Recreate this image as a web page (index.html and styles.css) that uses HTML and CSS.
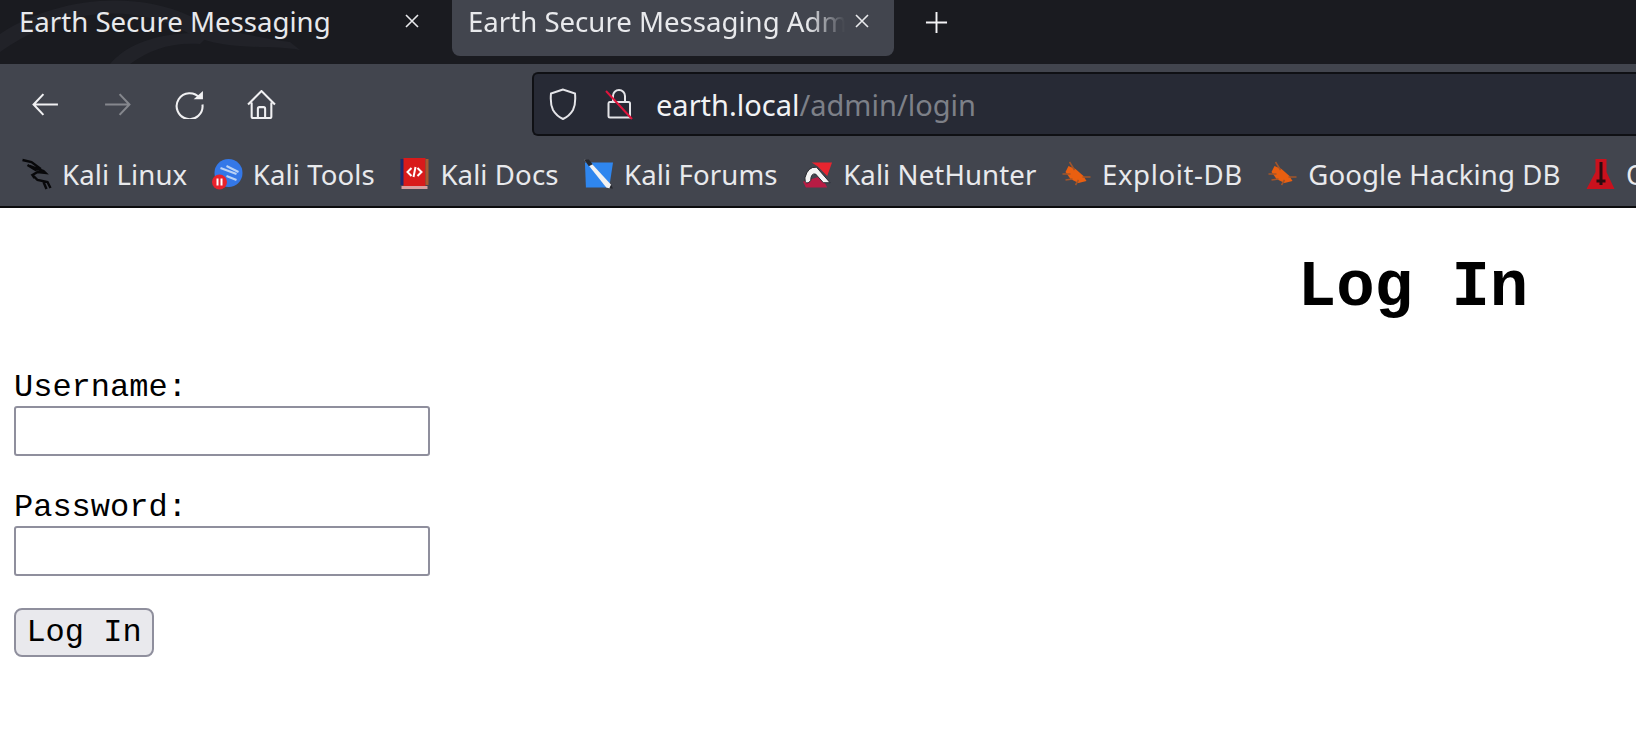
FILE: index.html
```html
<!DOCTYPE html>
<html lang="en">
<head>
  <meta charset="UTF-8" />
  <title>Earth Secure Messaging Admin</title>
  <link rel="stylesheet" href="styles.css">
</head>
<body>

  <header class="browser">
    <div class="tabbar">
      <svg class="wallpaper" viewBox="0 0 400 64" aria-hidden="true">
        <path d="M0 52 C60 10 130 0 190 34 C225 52 270 44 300 50 L290 42 C250 36 220 30 190 16 C130 -12 50 0 0 34 Z" />
        <path d="M110 64 C130 40 170 30 210 34 L200 44 C170 42 150 50 130 64 Z" />
      </svg>
      <div class="tab">
        <span class="tab-title">Earth Secure Messaging</span>
        <svg class="tab-close" viewBox="0 0 16 16"><path d="M2 2 14 14M14 2 2 14" /></svg>
      </div>
      <div class="tab tab-active">
        <span class="tab-title tab-fade">Earth Secure Messaging Admin</span>
        <svg class="tab-close" viewBox="0 0 16 16"><path d="M2 2 14 14M14 2 2 14" /></svg>
      </div>
      <svg class="new-tab" viewBox="0 0 24 24"><path d="M12 1V23M1 12H23" /></svg>
    </div>

    <div class="navbar">
      <svg class="nav-icon" viewBox="0 0 28 28"><path d="M26 14H3M12 4 2.500 14 12 24" /></svg>
      <svg class="nav-icon nav-off" viewBox="0 0 28 28"><path d="M2 14H25M16 4 25.500 14 16 24" /></svg>
      <svg class="nav-icon" viewBox="0 0 28 28"><path d="M24 8A12.500 12.500 0 1 0 26.500 14" /><path class="solid" d="M18 9H27V1Z" /></svg>
      <svg class="nav-icon" viewBox="0 0 28 28"><path d="M1 14 14 1 27 14M4.500 12V25.500Q4.500 27 6 27H22Q23.500 27 23.500 25.500V12M10.500 27V18Q10.500 16.500 12 16.500H16Q17.500 16.500 17.500 18V27" /></svg>

      <div class="urlbar">
        <svg class="url-icon" viewBox="0 0 28 32"><path d="M14 1.500 2 5.500Q1 16 4 22 7.500 28 14 31 20.500 28 24 22 27 16 26 5.500Z" /></svg>
        <svg class="url-icon lock" viewBox="0 0 28 32">
          <path d="M8 14V8A6 6 0 0 1 20 8V14M4.500 14H23.500Q25 14 25 15.500V29.500H5Q3.500 29.500 3.500 28V15.500Q3.500 14 4.500 14Z" />
          <path class="slash" d="M1 3 27 31" />
        </svg>
        <span class="url-text">earth.local<span class="url-path">/admin/login</span></span>
      </div>
    </div>

    <nav class="bookmarks">
      <a class="mark">
        <svg viewBox="0 0 30 32"><path class="kali" d="M1 2 10 4 18 10 14 12 6 7M8 8 22 13 24 15 16 14 11 17 16 22 26 24 29 30M11 17 13 20M22 24 25 31" /></svg>
        Kali Linux
      </a>
      <a class="mark">
        <svg viewBox="0 0 30 32"><circle cx="16" cy="15" r="14" fill="#3478e8" /><path d="M8 10 24 16M14 8 26 14M14 18 24 22" fill="none" stroke="#b9d2f5" stroke-width="2" /><circle cx="7" cy="24" r="7.500" fill="#e8222c" /><path d="M5 20.500V27.500M9 20.500V27.500" stroke="#fff" stroke-width="2" /></svg>
        Kali Tools
      </a>
      <a class="mark">
        <svg viewBox="0 0 30 32"><rect x="1" y="1" width="4" height="26" fill="#1d2a6e" /><rect x="4" y="0" width="22" height="28" fill="#d81b1b" /><rect x="26" y="1" width="3" height="26" fill="#a85a30" /><rect x="2" y="28" width="26" height="3" fill="#d8a0a0" /><path d="M12 10 8 14 12 18M18 10 22 14 18 18M16 9 14 19" fill="none" stroke="#fff" stroke-width="2" /></svg>
        Kali Docs
      </a>
      <a class="mark">
        <svg viewBox="0 0 32 32"><path d="M2 4H31L27 30H3Z" fill="#2f86ee" /><path d="M1 1 6 2 29 27 28 31 24 30Z" fill="#f2f2f2" /><path d="M1 1 6 1 10 6 6 8Z" fill="#26282e" /><path d="M29 27 31 31 27 31Z" fill="#26282e" /></svg>
        Kali Forums
      </a>
      <a class="mark">
        <svg viewBox="0 0 32 32"><path d="M10 4H31L26 18 16 8Z" fill="#e8252f" /><path d="M1 24 4 30 26 30 20 18Z" fill="#b81c44" /><path d="M3 20Q6 8 15 9L29 25 22 25 14 16Q9 15 9 23 3 29 3 20Z" fill="#f4f4f4" stroke="#26282e" stroke-width="1" /></svg>
        Kali NetHunter
      </a>
      <a class="mark mark-wide">
        <svg viewBox="0 0 30 32"><path class="bug" d="M7 8 14 11 22 18 25 23 17 25 9 21 4 14Z" /><path class="legs" d="M8 4 13 12M1 16 9 16M4 22 11 21M14 27 17 22M29 19 21 19" /></svg>
        Exploit-DB
      </a>
      <a class="mark">
        <svg viewBox="0 0 30 32"><path class="bug" d="M7 8 14 11 22 18 25 23 17 25 9 21 4 14Z" /><path class="legs" d="M8 4 13 12M1 16 9 16M4 22 11 21M14 27 17 22M29 19 21 19" /></svg>
        Google Hacking DB
      </a>
      <a class="mark">
        <svg viewBox="0 0 30 32"><path d="M10 1H21V14L29 31H1L10 14Z" fill="#c9111d" /><path d="M15.500 4V27M11 23H20" fill="none" stroke="#2a0c10" stroke-width="3" /></svg>
        OffSec
      </a>
    </nav>
  </header>

  <main class="page">
    <h1>Log In</h1>
    <form class="login">
      <label for="username">Username:</label>
      <input type="text" id="username">
      <label for="password">Password:</label>
      <input type="password" id="password">
      <button type="button">Log In</button>
    </form>
  </main>

</body>
</html>
```

FILE: styles.css
```css
html, body { margin: 0; height: 100%; overflow: hidden; background: #fff; }
body { font-family: "Liberation Mono", monospace; color: #000; }

.browser { font-family: "Noto Sans", sans-serif; font-size: 27.6px; color: #e8e9ec; }

.tabbar {
  height: 64px; display: flex; position: relative; overflow: hidden;
  background: #1a1b20;
}
.wallpaper { position: absolute; left: 0; top: 0; width: 400px; height: 64px; }
.wallpaper path { fill: #212228; }
.tab {
  width: 452px; height: 56px; box-sizing: border-box; flex: none; position: relative;
  display: flex; align-items: center; padding: 0 0 14px 19px;
}
.tab-active {
  width: 442px; padding-left: 16px;
  background: #42454e; border-radius: 0 0 8px 8px;
}
.tab-title { flex: 1; min-width: 0; overflow: hidden; white-space: nowrap; }
.tab-fade {
  margin-right: 9px;
  -webkit-mask-image: linear-gradient(to right, #000 90%, transparent);
  mask-image: linear-gradient(to right, #000 90%, transparent);
}
.tab-close { width: 16px; height: 16px; flex: none; margin-right: 32px; }
.tab-active .tab-close { margin-right: 24px; }
.tab-close path { stroke: #e8e9ec; stroke-width: 1.6; fill: none; }
.new-tab { width: 23px; height: 23px; margin: 11px 0 0 31px; position: relative; }
.new-tab path { stroke: #f4f4f6; stroke-width: 2; fill: none; }

.navbar {
  height: 72px; box-sizing: border-box; background: #42454e;
  display: flex; align-items: center; padding: 8px 0 0 31px;
}
.nav-icon { width: 29px; height: 29px; flex: none; margin-right: 43px; }
.nav-icon path { stroke: #f0f0f2; stroke-width: 2; fill: none; }
.nav-icon .solid { fill: #f0f0f2; stroke: none; }
.nav-off path { stroke: #85878d; }
.nav-icon:nth-child(4) { margin-right: 0; }
.urlbar {
  margin-left: 256px; flex: 1; height: 64px; box-sizing: border-box;
  background: #272a35; border: 2px solid #0f1014; border-right: 0;
  border-radius: 6px 0 0 6px;
  display: flex; align-items: center; padding-left: 15px;
}
.url-icon { width: 28px; height: 32px; flex: none; margin-right: 28px; }
.url-icon path { stroke: #e4e4e8; stroke-width: 2; fill: none; }
.url-icon .slash { stroke: #e0143c; }
.lock { margin-right: 23px; }
.url-text { font-size: 29px; color: #f2f3f5; }
.url-path { color: #7d8088; }

.bookmarks {
  height: 72px; box-sizing: border-box; background: #42454e;
  border-bottom: 2px solid #0c0c0e;
  display: flex; align-items: center; padding: 6px 0 0 21px; gap: 24.500px;
  white-space: nowrap; overflow: hidden; letter-spacing: 0.100px;
}
.mark { display: flex; align-items: center; gap: 10px; flex: none; }
.mark-wide { letter-spacing: 0.600px; }
.mark svg { width: 31px; height: 32px; flex: none; }
.kali { fill: none; stroke: #08080a; stroke-width: 2.400; }
.bug { fill: #ea5f10; }
.legs { stroke: #a3552a; stroke-width: 1.500; fill: none; }

/* the page is wider than the captured window, so the heading sits far right */
.page { width: 2826px; }
h1 { margin: 0; padding-top: 44px; font-size: 64px; line-height: 72px; text-align: center; }
.login { display: flex; flex-direction: column; align-items: flex-start; padding: 46px 0 0 14px; }
label { font-size: 32px; line-height: 36px; height: 36px; }
input {
  width: 416px; height: 50px; box-sizing: border-box; margin: 0 0 34px;
  background: #fff; border: 2px solid #8f8f9d; border-radius: 3px;
}
button {
  font-family: inherit; font-size: 32px; color: #000;
  height: 49px; width: 140px; padding: 0; margin-top: -2px; box-sizing: border-box;
  background: #e9e9ed; border: 2px solid #8f8f9d; border-radius: 8px;
}
```
